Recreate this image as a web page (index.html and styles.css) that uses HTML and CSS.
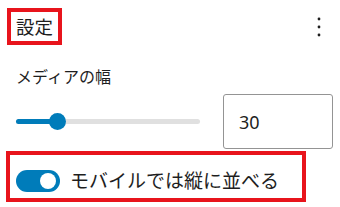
FILE: index.html
```html
<html>
<head>
<title>設定</title>
<link rel="stylesheet" href="styles.css">
</head>
<body>

<div class="panel">
    <div class="panel-header">
        <h2 class="panel-title mark">設定</h2>
        <button class="menu-button" aria-label="オプション">
            <svg width="6" height="24" viewBox="0 0 6 24">
                <circle cx="3" cy="4" r="1.4"/>
                <circle cx="3" cy="12" r="1.4"/>
                <circle cx="3" cy="20" r="1.4"/>
            </svg>
        </button>
    </div>

    <div class="control">
        <label class="control-label">メディアの幅</label>
        <div class="range-row">
            <div class="range">
                <div class="range-track"></div>
                <div class="range-fill"></div>
                <div class="range-thumb"></div>
            </div>
            <input type="text" class="number-input" value="30">
        </div>
    </div>

    <div class="toggle-row mark">
        <span class="toggle"><span class="toggle-knob"></span></span>
        <span class="toggle-label">モバイルでは縦に並べる</span>
    </div>
</div>

</body>
</html>
```

FILE: styles.css
```css
body {
    margin: 0;
    background-color: #fff;
    font-family: "Noto Sans", "Noto Sans CJK JP", sans-serif;
    color: #1e1e1e;
}

.panel {
    width: 340px;
    padding: 8px 0 0 0;
    box-sizing: border-box;
}

.mark {
    border: 4px solid #e8141c;
}

.panel-header {
    display: flex;
    justify-content: space-between;
    align-items: center;
    padding-left: 7px;
    padding-right: 18px;
}

.panel-title {
    margin: 0;
    height: 29px;
    padding: 0 5px 0 5px;
    font-size: 18.5px;
    font-weight: normal;
    line-height: 29px;
}

.menu-button {
    background: none;
    border: none;
    padding: 0;
    width: 6px;
    height: 24px;
    fill: #1e1e1e;
}

.control {
    padding: 0 7px 0 16px;
}

.control-label {
    display: block;
    margin-top: 20px;
    font-size: 16px;
    line-height: 24px;
}

.range-row {
    display: flex;
    align-items: center;
    margin-top: 5px;
}

.range {
    position: relative;
    width: 185px;
    height: 17px;
    margin-right: 23px;
}

.range-track {
    position: absolute;
    left: 0;
    right: 0;
    top: 6px;
    height: 5px;
    border-radius: 3px;
    background-color: #e0e0e0;
}

.range-fill {
    position: absolute;
    left: 0;
    width: 42px;
    top: 6px;
    height: 5px;
    border-radius: 3px;
    background-color: #007cba;
}

.range-thumb {
    position: absolute;
    left: 33px;
    top: 0;
    width: 17px;
    height: 17px;
    border-radius: 50%;
    background-color: #007cba;
}

.number-input {
    width: 110px;
    height: 55px;
    box-sizing: border-box;
    padding: 0 15px;
    border: 1px solid #949494;
    border-radius: 3px;
    font-family: "Noto Sans", sans-serif;
    font-size: 18px;
    color: #1e1e1e;
}

.toggle-row {
    display: flex;
    align-items: center;
    width: 300px;
    height: 51px;
    box-sizing: border-box;
    margin: 2px 0 0 6px;
    padding: 15px 0 7px 6px;
}

.toggle {
    position: relative;
    width: 44px;
    height: 22px;
    border-radius: 11px;
    background-color: #007cba;
    flex-shrink: 0;
}

.toggle-knob {
    position: absolute;
    right: 4px;
    top: 3px;
    width: 16px;
    height: 16px;
    border-radius: 50%;
    background-color: #fff;
}

.toggle-label {
    margin-left: 10px;
    font-size: 19px;
    line-height: 22px;
}
```
